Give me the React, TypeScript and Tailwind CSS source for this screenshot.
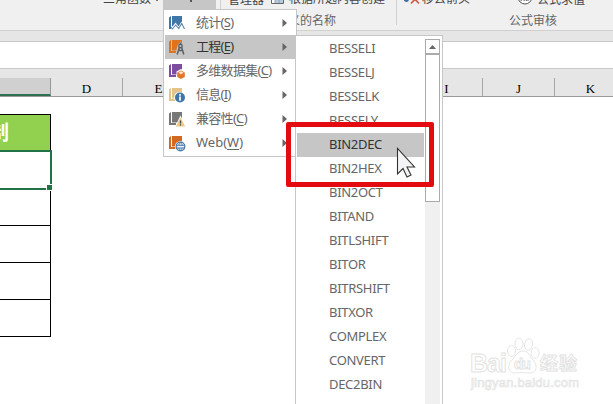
import React from 'react';

const functions = [
    'BESSELI', 'BESSELJ', 'BESSELK', 'BESSELY', 'BIN2DEC', 'BIN2HEX', 'BIN2OCT', 'BITAND',
    'BITLSHIFT', 'BITOR', 'BITRSHIFT', 'BITXOR', 'COMPLEX', 'CONVERT', 'DEC2BIN',
];

const categories = [
    { label: '统计', hotkey: 'S', color: '#3f76a8', badge: 'chart' },
    { label: '工程', hotkey: 'E', color: '#e0731d', badge: 'compass' },
    { label: '多维数据集', hotkey: 'C', color: '#7d4ba0', badge: 'cube' },
    { label: '信息', hotkey: 'I', color: '#e3c48d', badge: 'info' },
    { label: '兼容性', hotkey: 'C', color: '#777777', badge: 'warning' },
    { label: 'Web', hotkey: 'W', color: '#d2691e', badge: 'globe' },
];

// F, G and H sit behind the open menus
const columns = [
    { id: 4, name: 'D' },
    { id: 5, name: 'E' },
    { id: 6, name: '' },
    { id: 7, name: '' },
    { id: 8, name: '' },
    { id: 9, name: 'I' },
    { id: 10, name: 'J' },
    { id: 11, name: 'K' },
];

function BookIcon({ color, badge }: { color: string; badge: string }) {
    return (
        <svg width="18" height="17" viewBox="0 0 18 17" className="shrink-0">
            <path d="M4 1h10v10.500H4z" fill={color} />
            <path d="M1 2.500L3 1v11H8v2H1z" fill={color} />
            {badge === 'chart' && (
                <>
                    <path d="M3.500 13l4-5.500 3 4 3-5 4 7V17h-14z" fill="#fff" />
                    <path d="M4 14.500l3.700-4.500 3 3.500 3-5 2.800 5.500" fill="none" stroke="#5f88a8" strokeWidth="1.1" />
                </>
            )}
            {badge === 'compass' && (
                <>
                    <path d="M9 15l2-8 1.500-2L14 7l2 8" fill="#c6c6c6" stroke="#c6c6c6" strokeWidth="3" />
                    <path d="M9.200 15.500l2.300-7.500M15.800 15.500l-2.300-7.500M10.500 11.500h4" fill="none" stroke="#5c6066" strokeWidth="1.500" />
                    <path d="M12.500 3.500v2" stroke="#5c6066" strokeWidth="1.500" />
                    <circle cx="12.500" cy="7" r="1.700" fill="#c6c6c6" stroke="#5c6066" strokeWidth="1.400" />
                </>
            )}
            {badge === 'cube' && (
                <>
                    <path d="M13 6l4.500 2.500v6L13 17l-4.500-2.500v-6z" fill="#fff" />
                    <path d="M13 7.500l3.800 2.100v4.300L13 16.100l-3.800-2.200V9.600z" fill="#e17827" />
                    <path d="M13 8.300l2.700 1.500-2.700 1.500-2.700-1.500z" fill="#fbe6d3" />
                </>
            )}
            {badge === 'info' && (
                <>
                    <circle cx="12" cy="10.500" r="5.800" fill="#fff" />
                    <circle cx="12" cy="10.500" r="5" fill="#3e75a6" />
                    <path d="M12 7v1.800M12 9.600v4.200" stroke="#fff" strokeWidth="1.700" />
                </>
            )}
            {badge === 'warning' && (
                <>
                    <path d="M12.500 4.500L18.500 17h-12z" fill="#fff" />
                    <path d="M12.500 6.500l4.700 9H7.800z" fill="#ecc987" />
                    <path d="M12.500 9.500v3M12.500 13.300v1.300" stroke="#444" strokeWidth="1.200" />
                </>
            )}
            {badge === 'globe' && (
                <>
                    <circle cx="12.500" cy="11.500" r="5.500" fill="#fff" />
                    <circle cx="12.500" cy="11.500" r="4.300" fill="#e8f1f8" stroke="#4577a4" strokeWidth="1.200" />
                    <path d="M8.500 10.300h8M8.500 13h8" stroke="#4577a4" strokeWidth="1" />
                    <path d="M12.500 7.200L10.700 10M12.500 7.200l1.800 2.800M10.700 13l1.800 2.800M14.300 13l-1.800 2.800" stroke="#4577a4" strokeWidth="0.800" />
                </>
            )}
        </svg>
    );
}

function Ribbon() {
    return (
        <div className="flex h-[31px] overflow-hidden border-b border-[#d0d0d0] bg-[#f0f0f0] text-[12px] whitespace-nowrap text-[#444]">
            <div className="flex w-[221px] shrink-0 border-r border-[#d0d0d0]">
                <div className="flex h-[7px] w-[163px] items-end pl-[103px] leading-4">
                    三角函数
                    <span className="ml-[5px] mb-[6px] h-[2px] w-[2px] bg-[#777]" />
                </div>
                <div className="flex h-[9px] w-[53px] justify-center bg-[#c6c6c6]">
                    <span className="ml-[2px] h-[2px] w-[2px] bg-[#555]" />
                </div>
            </div>
            <div className="w-[175px] shrink-0">
                <div className="flex h-[8px] items-end pl-[7px] leading-4">
                    <span>管理器</span>
                    <svg width="13" height="12" viewBox="0 0 13 12" className="mb-[4px] ml-[7px] shrink-0">
                        <path d="M.5.5h12v11H.5z" fill="#fff" stroke="#666" />
                        <path d="M4 5h8v6H4z" fill="#b7cbe0" />
                        <path d="M4 1v10M8 1v10M1 7.5h11" stroke="#8194a8" strokeWidth="0.8" />
                    </svg>
                    <span className="mb-px ml-[5px]">根据所选内容创建</span>
                </div>
                <div className="mt-[5px] pl-[55px] leading-4 text-[#666]">定义的名称</div>
            </div>
            <div className="mb-[5px] w-px shrink-0 bg-[#d0d0d0]" />
            <div className="w-[216px] shrink-0">
                <div className="flex h-[8px] items-end pl-[6px] leading-4">
                    <svg width="17" height="10" viewBox="0 0 17 10" className="mb-[3px] shrink-0">
                        <circle cx="3.4" cy="4.500" r="2.5" fill="#3f69a5" />
                        <path d="M8 0l8 8.500M16 0L8 8.500" stroke="#d2604a" strokeWidth="1.8" />
                    </svg>
                    <span className="mb-px ml-[2px]">移去箭头</span>
                    <svg width="16" height="16" viewBox="0 0 16 16" className="mb-[3px] ml-[47px] shrink-0">
                        <circle cx="8" cy="8" r="7" fill="#fff" stroke="#555" />
                        <path d="M4 12l1.500-4M7 12l1-4 1.500 4M11 8v4" fill="none" stroke="#555" />
                    </svg>
                    <span className="ml-[4px]">公式求值</span>
                </div>
                <div className="mt-[5px] pl-[112px] leading-4 text-[#666]">公式审核</div>
            </div>
        </div>
    );
}

function Sheet() {
    return (
        <>
            <div className="flex h-[28px] items-end border-b border-[#999] bg-[#e6e6e6]">
                <div className="h-[18px] w-[51px] shrink-0 border-r border-b-2 border-r-[#999] border-b-[#2f7050] bg-[#d0d0d0]" />
                {columns.map((column) => (
                    <div
                        key={column.id}
                        className="h-[18px] w-[72px] shrink-0 border-r border-[#a8a8a8] text-center font-['Liberation_Serif','Noto_Sans_CJK_SC',serif] text-[13px] leading-[21px] text-black"
                    >
                        {column.name}
                    </div>
                ))}
            </div>
            <div className="mt-[17px] w-[51px] border-t border-r border-black">
                <div className="flex h-[35px] items-center bg-[#92d050]">
                    <span className="-ml-[11px] text-[20px] leading-5 font-bold text-white">制</span>
                </div>
                <div className="relative -mr-[2px] h-[40px] border-y-2 border-r-2 border-[#217346] bg-white">
                    <span className="absolute -right-[3px] -bottom-[3px] h-[7px] w-[7px] border border-white bg-[#217346]" />
                </div>
                {[36, 37, 37, 37].map((height, i) => (
                    <div key={i} className="border-b border-black" style={{ height }} />
                ))}
            </div>
        </>
    );
}

function CategoryMenu() {
    return (
        <div className="absolute top-[9px] left-[163px] h-[148px] w-[134px] border border-[#c6c6c6] bg-white p-px">
            {categories.map((item, i) => (
                <div
                    key={item.label}
                    className={`flex h-[24px] items-center pr-[8px] pl-[3px] text-[13px] ${i === 1 ? 'bg-[#c6c6c6] text-[#333]' : 'text-[#666]'}`}
                >
                    <BookIcon color={item.color} badge={item.badge} />
                    <span className={`ml-[10px] flex-1 whitespace-nowrap ${item.label === 'Web' ? '' : 'tracking-[-0.7px]'}`}>
                        {item.label}(<u className="underline-offset-2">{item.hotkey}</u>)
                    </span>
                    <svg width="5" height="8" viewBox="0 0 5 8" className="shrink-0">
                        <path d="M.5 0L5 4 .5 8z" fill="#666" />
                    </svg>
                </div>
            ))}
        </div>
    );
}

function FunctionMenu() {
    return (
        <div className="absolute top-[35px] left-[295px] flex h-[380px] w-[148px] border border-[#c6c6c6] bg-white">
            <div className="w-[129px] pt-px pl-px">
                {functions.map((name) => (
                    <div
                        key={name}
                        className={`h-[24px] w-[127px] pl-[32px] text-[13px] leading-[22px] tracking-[-0.3px] ${name === 'BIN2DEC' ? 'bg-[#c6c6c6] text-[#333]' : 'text-[#666]'}`}
                    >
                        {name}
                    </div>
                ))}
            </div>
            <div className="mt-[3px] w-[15px] bg-[#f0f0f0]">
                <div className="flex h-[15px] items-center justify-center border border-[#ababab] bg-white">
                    <svg width="7" height="4" viewBox="0 0 7 4">
                        <path d="M0 4l3.500-4L7 4z" fill="#666" />
                    </svg>
                </div>
                <div className="h-[148px] border border-[#ababab] bg-white" />
            </div>
        </div>
    );
}

function Watermark() {
    return (
        <div className="absolute top-[336px] left-[470px] h-[60px] w-[112px] font-['Liberation_Sans','Noto_Sans_CJK_SC',sans-serif]">
            <svg width="112" height="60" viewBox="0 0 112 60" stroke="#e2e2e2" fill="#fff" strokeWidth="0.9">
                <text x="0" y="36" fontSize="25" fontWeight="700" textLength="37">Bai</text>
                <ellipse cx="41.500" cy="15" rx="4" ry="5.500" />
                <ellipse cx="49" cy="8" rx="4" ry="5.800" />
                <ellipse cx="58.500" cy="8.500" rx="4" ry="5.800" transform="rotate(10 58.500 8.500)" />
                <ellipse cx="65" cy="17" rx="4" ry="5.300" />
                <path d="M53 15c6 0 6 5 10 9 5 5 4 13-3 13-4 0-9-1-14 0-8 1-9-8-5-12 4-4 6-10 12-10z" />
                <text x="44" y="33" fontSize="15" fontWeight="700" textLength="17">du</text>
                <text x="70" y="34" fontSize="18" fontWeight="700" textLength="37">经验</text>
                <text x="1" y="51" fontSize="13" strokeWidth="0.7" textLength="108">jingyan.baidu.com</text>
            </svg>
        </div>
    );
}

export default function App() {
    return (
        <div className="relative h-[404px] w-[613px] overflow-hidden bg-white font-['Noto_Sans','Noto_Sans_CJK_SC',sans-serif]">
            <Ribbon />
            <div className="h-[10px] bg-[#e6e6e6]" />
            <div className="h-[28px] border-y border-[#c8c8c8] bg-white" />
            <Sheet />
            <CategoryMenu />
            <FunctionMenu />
            <Watermark />
            <div className="absolute top-[122px] left-[286px] h-[65px] w-[148px] rounded-[2px] border-[5px] border-[#e30b10]" />
            <svg width="22" height="32" viewBox="0 0 22 32" className="absolute top-[147px] left-[396px]">
                <path d="M1.500 1.500v25.500l5.500-5.500 4 8.500 4-2-4-8h7.500z" fill="#f4f4f6" stroke="#333" strokeWidth="1.100" />
            </svg>
        </div>
    );
}
